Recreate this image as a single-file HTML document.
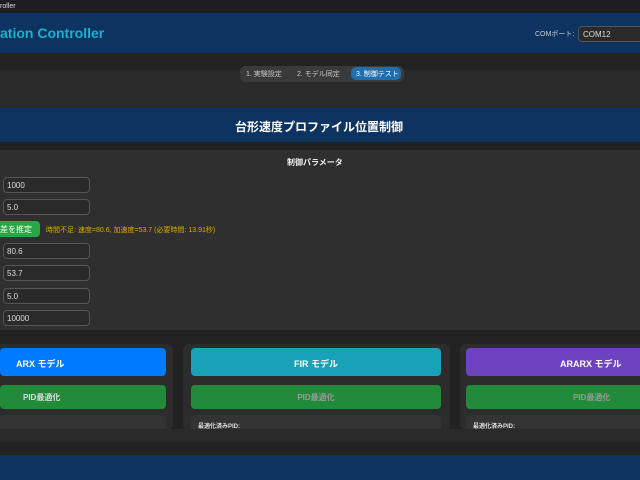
<!DOCTYPE html>
<html><head><meta charset="utf-8"><style>
*{box-sizing:border-box;margin:0;padding:0}
body{width:640px;height:480px;overflow:hidden;background:#222;font-family:"Liberation Sans","Noto Sans CJK JP",sans-serif;position:relative;color:#ddd}
.a{position:absolute}
.inp{position:absolute;left:3px;width:87px;height:16px;border:1px solid #555;border-radius:4px;background:#2a2a2a;color:#ddd;font-size:8px;padding:3px 0 0 3px}
.card{position:absolute;top:344px;height:86px;background:#2c2c2c;border-radius:6px}
.btn{position:absolute;border-radius:4px;color:#fff;font-size:9px;font-weight:bold;text-align:center}
</style></head><body>
<div class="a" style="left:0;top:0;width:640px;height:13px;background:#1e1d22;color:#ddd;font-size:7px;padding:3px 0 0 0">roller</div>
<div class="a" style="left:0;top:13px;width:640px;height:40px;background:#0d3360"></div>
<div class="a" style="left:0;top:25px;color:#1ab0d0;font-size:14px;font-weight:bold">ation Controller</div>
<div class="a" style="left:535px;top:29px;font-size:7px;color:#ccc">COMポート:</div>
<div class="a" style="left:578px;top:26px;width:70px;height:16px;background:#2a2a2a;border:1px solid #555;border-radius:4px;font-size:8px;color:#ddd;padding:3px 0 0 4px">COM12</div>
<div class="a" style="left:0;top:70px;width:640px;height:38px;background:#2a2a2a"></div>
<div class="a" style="left:240px;top:66px;width:164px;height:16px;background:#3a3a3a;border-radius:6px"></div>
<div class="a" style="left:246px;top:69px;font-size:7px;color:#ccc">1. 実験設定</div>
<div class="a" style="left:297px;top:69px;font-size:7px;color:#ccc">2. モデル同定</div>
<div class="a" style="left:351px;top:67px;width:50px;height:13px;background:#1f6fb0;border-radius:5px;font-size:7px;color:#fff;padding:2px 0 0 5px">3. 制御テスト</div>
<div class="a" style="left:0;top:108px;width:640px;height:34px;background:#0d3360;color:#fff;font-size:12px;font-weight:bold;text-align:center;padding-top:10px;text-indent:-2px">台形速度プロファイル位置制御</div>
<div class="a" style="left:0;top:150px;width:640px;height:180px;background:#2f2f2f"></div>
<div class="a" style="left:287px;top:157px;font-size:8px;font-weight:bold;color:#eee">制御パラメータ</div>
<div class="inp" style="top:177px">1000</div>
<div class="inp" style="top:199px">5.0</div>
<div class="a" style="left:0;top:221px;width:40px;height:16px;background:#28a745;border-radius:0 4px 4px 0;color:#fff;font-size:8px;padding:3px 0 0 0">差を推定</div>
<div class="a" style="left:46px;top:225px;font-size:7px;color:#e0a800">時間不足: 速度=80.6, 加速度=53.7 (必要時間: 13.91秒)</div>
<div class="inp" style="top:243px">80.6</div>
<div class="inp" style="top:265px">53.7</div>
<div class="inp" style="top:288px">5.0</div>
<div class="inp" style="top:310px">10000</div>
<div class="card" style="left:-10px;width:183px"></div>
<div class="card" style="left:183px;width:267px"></div>
<div class="card" style="left:460px;width:190px"></div>
<div class="btn" style="left:0;top:348px;width:166px;height:28px;background:#007bff;padding:9px 0 0 16px;text-align:left">ARX モデル</div>
<div class="btn" style="left:191px;top:348px;width:250px;height:28px;background:#17a2b8;padding-top:9px">FIR モデル</div>
<div class="btn" style="left:466px;top:348px;width:180px;height:28px;background:#6f42c1;padding:9px 0 0 94px;text-align:left">ARARX モデル</div>
<div class="btn" style="left:0;top:385px;width:166px;height:24px;background:#228b3a;padding:7px 0 0 23px;text-align:left;font-size:8px;color:#ddd">PID最適化</div>
<div class="btn" style="left:191px;top:385px;width:250px;height:24px;background:#228b3a;padding-top:7px;font-size:8px;color:#999">PID最適化</div>
<div class="btn" style="left:466px;top:385px;width:180px;height:24px;background:#228b3a;padding:7px 0 0 107px;text-align:left;font-size:8px;color:#999">PID最適化</div>
<div class="a" style="left:0;top:415px;width:166px;height:20px;background:#333;border-radius:4px"></div>
<div class="a" style="left:191px;top:415px;width:250px;height:20px;background:#333;border-radius:4px;font-size:6px;font-weight:bold;color:#ddd;padding:6px 0 0 7px">最適化済みPID:</div>
<div class="a" style="left:466px;top:415px;width:180px;height:20px;background:#333;border-radius:4px;font-size:6px;font-weight:bold;color:#ddd;padding:6px 0 0 7px">最適化済みPID:</div>
<div class="a" style="left:0;top:429px;width:640px;height:13px;background:#2a2a2a"></div>
<div class="a" style="left:0;top:442px;width:640px;height:13px;background:#222"></div>
<div class="a" style="left:0;top:455px;width:640px;height:25px;background:#0d3360"></div>
</body></html>
